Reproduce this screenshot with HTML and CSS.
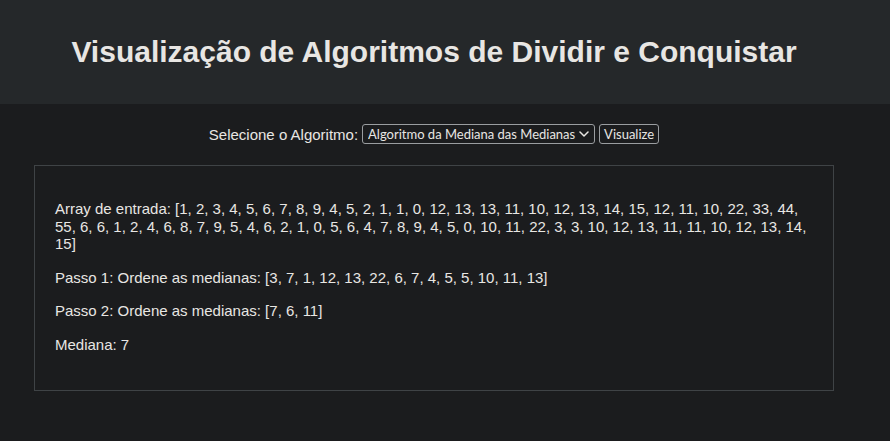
FILE: index.html
```html
<!DOCTYPE html>
<html lang="pt">
<head>
<meta charset="utf-8">
<title>Visualização de Algoritmos de Dividir e Conquistar</title>
<link rel="stylesheet" href="styles.css">
</head>
<body>
<header class="site-header">
  <div class="page">
    <h1 class="title">Visualização de Algoritmos de Dividir e Conquistar</h1>
  </div>
</header>
<main class="page">
  <div class="controls">
    <label class="label" for="algo">Selecione o Algoritmo:</label>
    <span class="select-wrap">
      <select class="select" id="algo">
        <option>Algoritmo da Mediana das Medianas</option>
      </select>
      <svg class="chev" width="10" height="6" viewBox="0 0 10 6"><path d="M1 1l4 4 4-4" fill="none" stroke="#e8e6e3" stroke-width="1.5" stroke-linecap="round" stroke-linejoin="round"/></svg>
    </span>
    <button class="button" type="button">Visualize</button>
  </div>
  <div class="output">
    <p class="line">Array de entrada: [1, 2, 3, 4, 5, 6, 7, 8, 9, 4, 5, 2, 1, 1, 0, 12, 13, 13, 11, 10, 12, 13, 14, 15, 12, 11, 10, 22, 33, 44, 55, 6, 6, 1, 2, 4, 6, 8, 7, 9, 5, 4, 6, 2, 1, 0, 5, 6, 4, 7, 8, 9, 4, 5, 0, 10, 11, 22, 3, 3, 10, 12, 13, 11, 11, 10, 12, 13, 14, 15]</p>
    <p class="line">Passo 1: Ordene as medianas: [3, 7, 1, 12, 13, 22, 6, 7, 4, 5, 5, 10, 11, 13]</p>
    <p class="line">Passo 2: Ordene as medianas: [7, 6, 11]</p>
    <p class="line">Mediana: 7</p>
  </div>
</main>
</body>
</html>
```
FILE: styles.css
```css
html, body {
  margin: 0;
  padding: 0;
}
body {
  background: #1b1c1e;
  color: #e8e6e3;
  font-family: "Liberation Sans", Arial, sans-serif;
  font-size: 15px;
  height: 441px;
  overflow: hidden;
}
.page {
  width: 868px;
}
.site-header {
  background: #25282a;
  padding: 34px 0;
  text-align: center;
}
.title {
  margin: 0;
  font-size: 30px;
  line-height: 36px;
  font-weight: bold;
  color: #e8e6e3;
}
.controls {
  display: flex;
  justify-content: center;
  align-items: center;
  gap: 4px;
  margin: 20px 0 21px;
  height: 20px;
}
.select-wrap {
  position: relative;
  display: inline-flex;
}
.select {
  appearance: none;
  -webkit-appearance: none;
  height: 20px;
  width: 233px;
  background: #1b1c1e;
  color: #e8e6e3;
  border: 1px solid #9a9da0;
  border-radius: 3px;
  font-family: Lato, "Liberation Sans", sans-serif;
  font-size: 13px;
  padding: 0 18px 0 5px;
  margin: 0;
}
.chev {
  position: absolute;
  right: 6px;
  top: 7px;
  pointer-events: none;
}
.button {
  height: 20px;
  background: #1b1c1e;
  color: #e8e6e3;
  border: 1px solid #9a9da0;
  border-radius: 3px;
  font-family: Lato, "Liberation Sans", sans-serif;
  font-size: 13px;
  padding: 0 4px;
  margin: 0;
}
.output {
  width: 758px;
  margin-left: 34px;
  padding: 18px 20px 21px;
  border: 1px solid #3f4346;
  display: flow-root;
}
.line {
  margin: 16px 0;
  line-height: 17.5px;
}
```
